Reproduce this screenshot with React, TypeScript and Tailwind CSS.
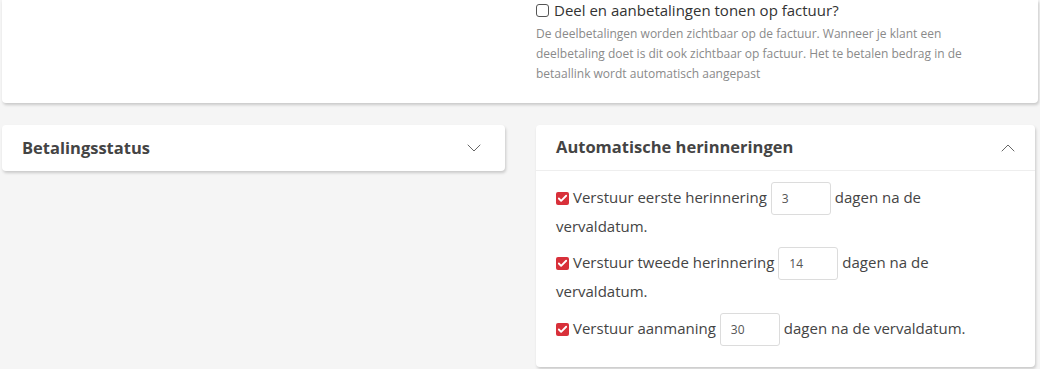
import { ChevronDown, ChevronUp, Check } from "lucide-react";

function RedCheck() {
    return (
        <span className="mr-[4px] inline-flex h-[13px] w-[13px] items-center justify-center rounded-[2px] bg-[#d8303a] align-[-1px]">
            <Check className="h-[11px] w-[11px] text-white" strokeWidth={4} />
        </span>
    );
}

function DaysInput({ value }: { value: string }) {
    return (
        <input
            readOnly
            value={value}
            className="mx-[4px] my-[-4px] inline-block h-[33px] w-[60px] rounded-[3px] border border-[#dcdcdc] bg-white px-[10px] align-middle text-[12px] text-[#555] outline-none"
        />
    );
}

function Reminder({ label, value, className }: { label: string; value: string; className?: string }) {
    return (
        <div className={`text-[15px] leading-[29px] text-[#444] ${className ?? ""}`}>
            <RedCheck />
            {label}
            <DaysInput value={value} />
            dagen na de vervaldatum.
        </div>
    );
}

export default function App() {
    return (
        <div className="min-h-[369px] w-[1040px] bg-[#f5f5f5] px-[2px] font-['Open_Sans',sans-serif]">
            <div className="rounded-b-[4px] bg-white shadow-[1px_2px_3px_rgba(0,0,0,0.18)]">
                <div className="grid grid-cols-[503px_500px] gap-[31px]">
                    <div />
                    <div className="pb-[19px]">
                        <label className="flex items-center gap-[5px] text-[15px] leading-[20px] text-[#333]">
                            <span className="h-[13px] w-[13px] rounded-[3px] border border-[#555] bg-white" />
                            Deel en aanbetalingen tonen op factuur?
                        </label>
                        <p className="mt-[4px] max-w-[445px] text-[12px] leading-[20px] text-[#8a8a8a]">
                            De deelbetalingen worden zichtbaar op de factuur. Wanneer je klant een deelbetaling doet is dit ook
                            zichtbaar op factuur. Het te betalen bedrag in de betaallink wordt automatisch aangepast
                        </p>
                    </div>
                </div>
            </div>

            <div className="mt-[22px] grid grid-cols-[503px_499px] items-start gap-[31px]">
                <div className="flex h-[46px] items-center justify-between rounded-[4px] bg-white pl-[20px] pr-[19px] shadow-[1px_2px_3px_rgba(0,0,0,0.18)]">
                    <h2 className="text-[16.5px] font-bold text-[#444]">Betalingsstatus</h2>
                    <ChevronDown className="h-[24px] w-[24px] text-[#666]" strokeWidth={1} />
                </div>

                <div className="rounded-[4px] bg-white shadow-[1px_2px_3px_rgba(0,0,0,0.18)]">
                    <div className="flex h-[46px] items-center justify-between border-b border-[#eeeeee] pl-[20px] pr-[15px]">
                        <h2 className="text-[16.5px] font-bold text-[#444]">Automatische herinneringen</h2>
                        <ChevronUp className="h-[24px] w-[24px] text-[#666]" strokeWidth={1} />
                    </div>
                    <div className="px-[20px] pb-[24px] pt-[12px]">
                        <Reminder label="Verstuur eerste herinnering" value="3" />
                        <Reminder label="Verstuur tweede herinnering" value="14" className="mt-[7px]" />
                        <Reminder label="Verstuur aanmaning" value="30" className="mt-[8px]" />
                    </div>
                </div>
            </div>
        </div>
    );
}
